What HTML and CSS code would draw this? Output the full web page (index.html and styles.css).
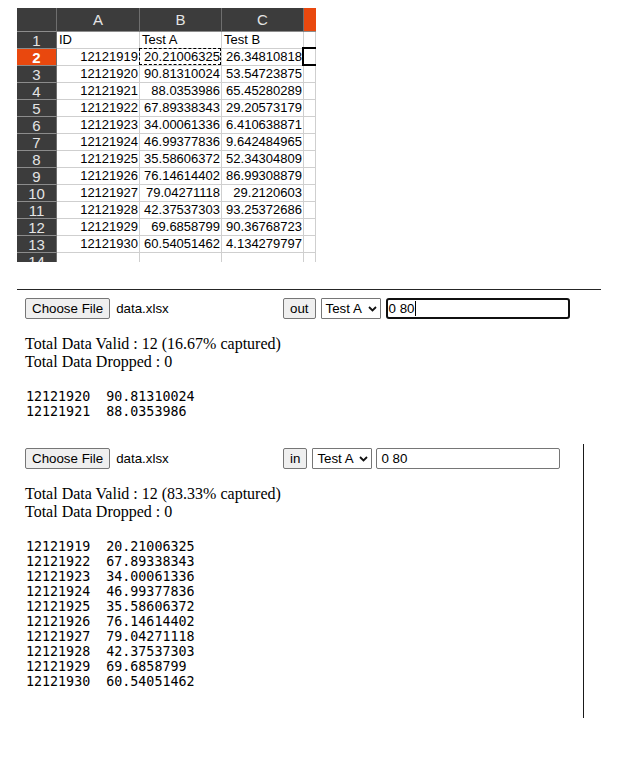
FILE: index.html
```html
<!DOCTYPE html>
<html>
<head>
<meta charset="utf-8">
<title>Data filter</title>
<link rel="stylesheet" href="styles.css">
</head>
<body>
<div class="page">
  <div class="sheet">
    <div class="h corner"></div><div class="h">A</div><div class="h">B</div><div class="h">C</div><div class="h hsel"></div>

    <div class="r">1</div><div class="c">ID</div><div class="c">Test A</div><div class="c">Test B</div><div class="c"></div>
    <div class="r rsel">2</div><div class="c n">12121919</div><div class="c n copy">20.21006325</div><div class="c n">26.34810818</div><div class="c cursor"></div>
    <div class="r">3</div><div class="c n">12121920</div><div class="c n">90.81310024</div><div class="c n">53.54723875</div><div class="c"></div>
    <div class="r">4</div><div class="c n">12121921</div><div class="c n">88.0353986</div><div class="c n">65.45280289</div><div class="c"></div>
    <div class="r">5</div><div class="c n">12121922</div><div class="c n">67.89338343</div><div class="c n">29.20573179</div><div class="c"></div>
    <div class="r">6</div><div class="c n">12121923</div><div class="c n">34.00061336</div><div class="c n">6.410638871</div><div class="c"></div>
    <div class="r">7</div><div class="c n">12121924</div><div class="c n">46.99377836</div><div class="c n">9.642484965</div><div class="c"></div>
    <div class="r">8</div><div class="c n">12121925</div><div class="c n">35.58606372</div><div class="c n">52.34304809</div><div class="c"></div>
    <div class="r">9</div><div class="c n">12121926</div><div class="c n">76.14614402</div><div class="c n">86.99308879</div><div class="c"></div>
    <div class="r">10</div><div class="c n">12121927</div><div class="c n">79.04271118</div><div class="c n">29.2120603</div><div class="c"></div>
    <div class="r">11</div><div class="c n">12121928</div><div class="c n">42.37537303</div><div class="c n">93.25372686</div><div class="c"></div>
    <div class="r">12</div><div class="c n">12121929</div><div class="c n">69.6858799</div><div class="c n">90.36768723</div><div class="c"></div>
    <div class="r">13</div><div class="c n">12121930</div><div class="c n">60.54051462</div><div class="c n">4.134279797</div><div class="c"></div>
    <div class="r">14</div><div class="c"></div><div class="c"></div><div class="c"></div><div class="c"></div>
  </div>

  <div class="rule"></div>

  <section class="panel first">
    <div class="controls">
      <div class="file"><span class="btn">Choose File</span><span class="fname">data.xlsx</span></div>
      <span class="btn mode">out</span>
      <span class="select">Test A<svg class="chev" width="9" height="6" viewBox="0 0 9 6"><path d="M1 1 L4.5 4.5 L8 1" fill="none" stroke="#111" stroke-width="1.8"/></svg></span>
      <span class="field focused">0 80<span class="caret"></span></span>
    </div>
    <p class="stats">Total Data Valid : 12 (16.67% captured)<br>Total Data Dropped : 0</p>
    <pre class="result">12121920  90.81310024
12121921  88.0353986</pre>
  </section>

  <section class="panel second">
    <div class="controls">
      <div class="file"><span class="btn">Choose File</span><span class="fname">data.xlsx</span></div>
      <span class="btn mode">in</span>
      <span class="select">Test A<svg class="chev" width="9" height="6" viewBox="0 0 9 6"><path d="M1 1 L4.5 4.5 L8 1" fill="none" stroke="#111" stroke-width="1.8"/></svg></span>
      <span class="field plain">0 80</span>
    </div>
    <p class="stats">Total Data Valid : 12 (83.33% captured)<br>Total Data Dropped : 0</p>
    <pre class="result">12121919  20.21006325
12121922  67.89338343
12121923  34.00061336
12121924  46.99377836
12121925  35.58606372
12121926  76.14614402
12121927  79.04271118
12121928  42.37537303
12121929  69.6858799
12121930  60.54051462</pre>
  </section>
</div>
</body>
</html>
```

FILE: styles.css
```css
body {
  margin: 8px;
  font-family: "Liberation Serif", serif;
  font-size: 16px;
  color: #000;
  background: #fff;
}

.page {
  margin-left: 9px;
}

/* spreadsheet */
.sheet {
  display: grid;
  grid-template-columns: 40px 83px 82px 82px 12px;
  grid-template-rows: 24px repeat(14, 17px);
  width: 299px;
  height: 254px;
  overflow: hidden;
  font-family: "Liberation Sans", Arial, sans-serif;
}

.h {
  box-sizing: border-box;
  background: #3c3c3c;
  color: #e4e4e4;
  font-size: 15px;
  line-height: 23px;
  text-align: center;
  border-right: 1px solid #6e6e6e;
  border-bottom: 1px solid #8c8c8c;
}

.h.hsel {
  background: #e9480e;
  border-right: none;
}

.r {
  box-sizing: border-box;
  background: #3c3c3c;
  color: #e4e4e4;
  font-size: 15px;
  line-height: 17px;
  text-align: center;
  border-right: 1px solid #6e6e6e;
  border-bottom: 1px solid #8c8c8c;
}

.r.rsel {
  background: #e9480e;
  color: #fff;
  font-weight: bold;
}

.c {
  box-sizing: border-box;
  position: relative;
  font-size: 13px;
  line-height: 16px;
  padding: 0 1px 0 2px;
  white-space: nowrap;
  overflow: hidden;
  border-right: 1px solid #cfcfcf;
  border-bottom: 1px solid #cfcfcf;
  color: #000;
}

.c.n {
  text-align: right;
}

.c.copy {
  overflow: visible;
}

.c.copy::after {
  content: "";
  position: absolute;
  left: -1px;
  top: -1px;
  right: 0;
  bottom: 0;
  border: 1px dashed #000;
}

.c.cursor {
  overflow: visible;
}

.c.cursor::after {
  content: "";
  position: absolute;
  left: -2px;
  top: -2px;
  right: -20px;
  bottom: -1px;
  border: 2px solid #000;
}

/* divider */
.rule {
  width: 584px;
  margin-top: 27px;
  border-top: 1px solid #262626;
}

/* panels */
.panel {
  box-sizing: border-box;
}

.panel.first {
  padding: 8px 8px 25px;
}

.panel.second {
  width: 567px;
  padding: 4px 8px 29px;
  border-right: 1px solid #1a1a1a;
}

.controls {
  display: flex;
  align-items: stretch;
  height: 21px;
  font-family: "Liberation Sans", Arial, sans-serif;
  font-size: 13.333px;
}

.file {
  display: flex;
  align-items: center;
  width: 258px;
}

.btn {
  box-sizing: border-box;
  display: flex;
  align-items: center;
  height: 21px;
  padding: 0 6px;
  background: #efefef;
  border: 1px solid #767676;
  border-radius: 2px;
  color: #000;
}

.fname {
  margin-left: 6px;
}

.select {
  box-sizing: border-box;
  display: flex;
  align-items: center;
  justify-content: space-between;
  width: 60px;
  margin-left: 5px;
  padding: 0 3px 0 4px;
  border: 1px solid #767676;
  border-radius: 1px;
  background: #fff;
}

.chev {
  display: block;
}

.field {
  box-sizing: border-box;
  display: flex;
  align-items: center;
  width: 184px;
  margin-left: 5px;
  padding: 0 3px;
  border: 1px solid #767676;
  border-radius: 2px;
  background: #fff;
}

.field.plain {
  margin-left: 4px;
  padding-left: 4px;
}

.field.focused {
  border: 2px solid #101010;
  border-radius: 3px;
  padding: 0 2px 0 1px;
}

.caret {
  display: inline-block;
  width: 1px;
  height: 15px;
  background: #000;
  margin-left: 1px;
}

.stats {
  margin: 16px 0 0;
  line-height: 18px;
}

.result {
  margin: 18px 0 0 1px;
  font-family: "DejaVu Sans Mono", monospace;
  font-size: 13.333px;
  line-height: 15px;
}
```
